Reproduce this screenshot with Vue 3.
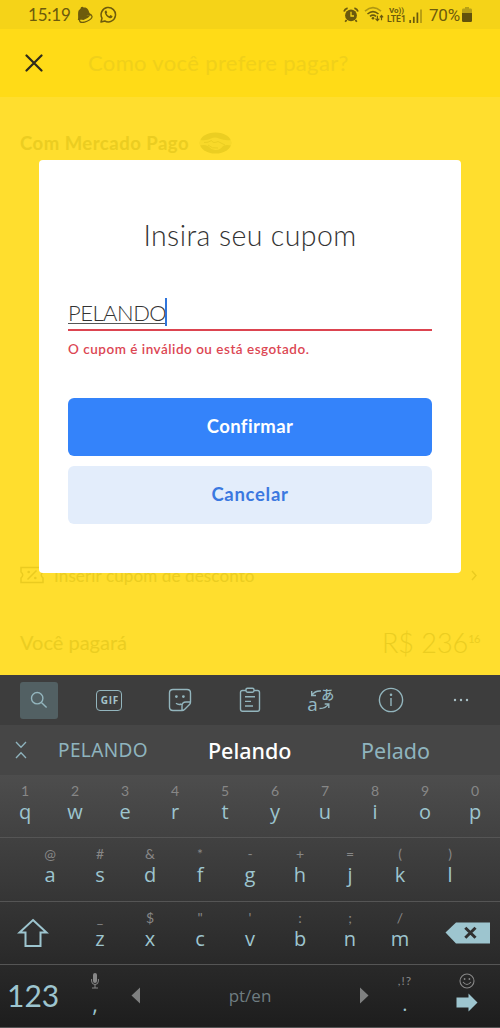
<script setup>
const row1 = [['q','1'],['w','2'],['e','3'],['r','4'],['t','5'],['y','6'],['u','7'],['i','8'],['o','9'],['p','0']]
const row2 = [['a','@'],['s','#'],['d','&'],['f','*'],['g','-'],['h','+'],['j','='],['k','('],['l',')']]
const row3 = [['z','_'],['x','$'],['c','"'],['v',"'"],['b',':'],['n',';'],['m','/']]
</script>

<template>
  <div class="screen">
    <div class="status">
      <span class="time">15:19</span>
      <svg class="bell" width="16" height="17" viewBox="0 0 16 17">
        <path d="M.8 14 C1.8 11 .3 7 1.8 4.2 L3.5 2.8 C3.5 .6 5.8 .2 6.6 1.6 C10.5 1.2 11.5 4 12.5 7 L15 9 L12 12.5 L6 15 Z" fill="#6d5b0c"/>
        <ellipse cx="8.8" cy="12.6" rx="6.6" ry="2.9" transform="rotate(-24 8.8 12.6)" fill="#f3d318" stroke="#6d5b0c" stroke-width="1.2"/>
        <path d="M3 13.5 Q6 9 13.5 9.3 L11 11.8 L6.5 13.9Z" fill="#6d5b0c"/>
      </svg>
      <svg class="wa" width="17" height="17" viewBox="0 0 17 17">
        <path d="M1 16 L2 12.2 A7.2 7.2 0 1 1 4.8 15 Z" fill="none" stroke="#6d5b0c" stroke-width="1.5" stroke-linejoin="round"/>
        <path d="M5.7 4.5 Q4.5 5 4.7 6.5 Q5.5 10.5 9.8 12.2 Q12 12.6 12.5 10.8 L12.4 10.1 L10.3 9.1 L9.4 10.2 Q7.4 9.3 6.5 7.4 L7.2 6.4 L6.4 4.5 Z" fill="#6d5b0c"/>
      </svg>
      <span class="grow"></span>
      <svg class="alarm" width="16" height="16" viewBox="0 0 16 16">
        <circle cx="8" cy="8.4" r="5.9" fill="#6a590d"/>
        <path d="M1 4.6 Q1.8 2 4.6 1.2 M15 4.6 Q14.2 2 11.4 1.2 M3.6 13 L2.2 14.7 M12.4 13 L13.8 14.7" stroke="#6a590d" stroke-width="1.8" fill="none"/>
        <path d="M8 4.8 V9 H11" stroke="#f3d318" stroke-width="1.3" fill="none"/>
      </svg>
      <svg class="wifi" width="20" height="17" viewBox="0 0 20 17">
        <path d="M1 5.2 Q9 -1.8 17 5.2" stroke="#b09812" stroke-width="1.6" fill="none"/>
        <path d="M3.5 8 Q9 3.4 14.5 8 M6 10.3 Q9 8 12 10.3" stroke="#6a590d" stroke-width="1.6" fill="none"/>
        <circle cx="9" cy="12.3" r="1.3" fill="#6a590d"/>
        <path d="M13.4 9.8 V14.5 M11.5 12.7 L13.4 14.7 L15.3 12.7 M17.5 14.2 V9.7 M15.9 11.3 L17.5 9.5 L19.1 11.3" stroke="#6a590d" stroke-width="1.2" fill="none"/>
      </svg>
      <span class="volte"><span class="vo">Vo))</span><span>LTE1</span></span>
      <svg class="signal" width="14" height="14" viewBox="0 0 14 14">
        <path d="M1.2 11 V14 M4.8 7.7 V14 M8.4 3.5 V14" stroke="#6a590d" stroke-width="1.7"/>
        <path d="M12 .5 V14" stroke="#b09812" stroke-width="1.7"/>
      </svg>
      <span class="pct">70%</span>
      <svg class="batt" width="10" height="15" viewBox="0 0 10 15">
        <path d="M3 0 H7 V1.5 H9 Q10 1.5 10 3 V7 H0 V3 Q0 1.5 1 1.5 H3Z" fill="#b8a016"/>
        <path d="M0 6 H10 V13.5 Q10 15 8.8 15 H1.2 Q0 15 0 13.5Z" fill="#62520c"/>
      </svg>
    </div>

    <div class="header">
      <svg width="18" height="18" viewBox="0 0 18 18"><path d="M1.5 1.5 L16.5 16.5 M16.5 1.5 L1.5 16.5" stroke="#2f2b1c" stroke-width="2.2" stroke-linecap="round"/></svg>
      <span>Como você prefere pagar?</span>
    </div>

    <div class="page">
      <div class="mp">
        <span>Com Mercado Pago</span>
        <svg width="33" height="22" viewBox="0 0 33 22">
          <ellipse cx="16.5" cy="11" rx="15.8" ry="10.5" fill="#ebce22"/>
          <path d="M1 8 Q8 9 12 6.5 Q16 4.5 20 6.5 Q26 9 32 8 L32 13.5 Q27 12.5 24 14 Q21 18.5 16 18 Q12 17.5 9 14 Q5 12.5 1 13.5Z" fill="#f8d92a"/>
          <path d="M5 10.5 Q9 11 12.5 8.5 Q14 12 19 9.5 L26 13 M9 13 Q13 17 19 16" stroke="#ebce22" stroke-width="1" fill="none"/>
        </svg>
      </div>
      <span class="grow"></span>
      <div class="coupon">
        <svg width="24" height="18" viewBox="0 0 24 18">
          <path d="M1 1.5 H23 V6 Q19.5 9 23 12 V16.5 H1 V12 Q4.5 9 1 6Z M16.5 4.5 L7.5 13.5" stroke="#eacb20" stroke-width="1.5" fill="none"/>
          <circle cx="8.7" cy="6" r="1.3" fill="#eacb20"/><circle cx="15.3" cy="12" r="1.3" fill="#eacb20"/>
        </svg>
        <span>Inserir cupom de desconto</span>
        <svg class="chev" width="6" height="11" viewBox="0 0 6 11"><path d="M1 1 L5 5.5 L1 10" stroke="#eacb20" stroke-width="1.4" fill="none"/></svg>
      </div>
      <div class="total">
        <span class="you">Você pagará</span>
        <span class="price">R$ 236<sup>16</sup></span>
      </div>
    </div>

    <div class="modal">
      <h1><span>Insira seu cupom</span></h1>
      <div class="field"><span class="value">PELANDO</span><i class="caret"></i></div>
      <p class="error">O cupom é inválido ou está esgotado.</p>
      <button class="btn primary">Confirmar</button>
      <button class="btn secondary">Cancelar</button>
    </div>

    <div class="keyboard">
      <div class="tools">
        <div class="tool"><div class="search">
          <svg width="18" height="18" viewBox="0 0 18 18"><circle cx="7.2" cy="7.2" r="5.7"/><path d="M11.4 11.4 L16.6 16.6"/></svg>
        </div></div>
        <div class="tool"><div class="gif">GIF</div></div>
        <div class="tool">
          <svg width="24" height="24" viewBox="0 0 24 24"><path d="M14 22.5 H5 Q1.5 22.5 1.5 19 V5 Q1.5 1.5 5 1.5 H19 Q22.5 1.5 22.5 5 V14 Q22.5 15.5 21.5 16.5 L16.5 21.5 Q15.5 22.5 14 22.5 Z M14 22.3 V18 Q14 14 18 14 H22.3 M8 15.2 Q10.5 17.2 13.5 16"/><circle cx="8.4" cy="8.6" r=".7" class="dot"/><circle cx="15.4" cy="8.6" r=".7" class="dot"/></svg>
        </div>
        <div class="tool">
          <svg width="22" height="26" viewBox="0 0 22 26"><path d="M7 3.5 H3.5 Q1.5 3.5 1.5 5.5 V22 Q1.5 24.2 3.5 24.2 H18.5 Q20.5 24.2 20.5 22 V5.5 Q20.5 3.5 18.5 3.5 H15 M7 2.8 Q7 1.2 8.5 1.2 H13.5 Q15 1.2 15 2.8 V3.8 Q15 5.2 13.5 5.2 H8.5 Q7 5.2 7 3.8Z M6 9.7 H16 M6 14.4 H12 M6 19 H14"/></svg>
        </div>
        <div class="tool">
          <div class="translate"><span class="latin">a</span><span class="kana">あ</span>
            <svg width="24" height="24" viewBox="0 0 24 24"><path d="M13 3 Q7 2.5 4 7 M3.7 3 V7.5 H8 M11.5 20.5 Q18 20.5 20.5 16 M16.7 16 H20.8 V20"/></svg>
          </div>
        </div>
        <div class="tool">
          <svg width="26" height="26" viewBox="0 0 26 26"><circle cx="13" cy="13" r="11.6"/><path d="M13 11 V19"/><circle cx="13" cy="7.8" r=".6" class="dot"/></svg>
        </div>
        <div class="tool">
          <svg width="18" height="4" viewBox="0 0 18 4"><g class="solid"><circle cx="3" cy="2" r="1.2"/><circle cx="9" cy="2" r="1.2"/><circle cx="15" cy="2" r="1.2"/></g></svg>
        </div>
      </div>

      <div class="suggest">
        <svg width="12" height="18" viewBox="0 0 12 18"><path d="M1 1 L6 6.3 L11 1 M1 17 L6 11.7 L11 17" stroke="#8fb4be" stroke-width="1.3" fill="none"/></svg>
        <span class="s1">PELANDO</span>
        <span class="s2">Pelando</span>
        <span class="s3">Pelado</span>
      </div>

      <div class="keys">
        <div class="row">
          <div v-for="k in row1" :key="k[0]" class="key"><small>{{ k[1] }}</small><b>{{ k[0] }}</b></div>
        </div>
        <div class="row inset">
          <div v-for="k in row2" :key="k[0]" class="key"><small>{{ k[1] }}</small><b>{{ k[0] }}</b></div>
        </div>
        <div class="row">
          <div class="wide shift"><svg width="32" height="30" viewBox="0 0 32 30"><path d="M16 2 L29.5 14.5 H23.5 V28 H8.5 V14.5 H2.5Z" fill="none" stroke="#9dc5cf" stroke-width="2"/></svg></div>
          <div v-for="k in row3" :key="k[0]" class="key"><small>{{ k[1] }}</small><b>{{ k[0] }}</b></div>
          <div class="wide del"><svg width="45" height="22" viewBox="0 0 45 22"><path d="M.5 10.5 L11 .5 H45 V21.5 H11Z" fill="#9dc5cf"/><path d="M20.3 5.8 L30.5 15.8 M30.5 5.8 L20.3 15.8" stroke="#303030" stroke-width="3"/></svg></div>
        </div>
        <div class="row">
          <div class="num">123</div>
          <div class="key">
            <svg class="mic" width="8" height="16" viewBox="0 0 8 16"><rect x="2" y="0" width="4" height="10" rx="2" fill="#878787"/><path d="M.6 6 V8 Q.6 11.5 4 11.5 Q7.4 11.5 7.4 8 V6 M4 11.5 V15 M1 15 H7" stroke="#878787" fill="none"/></svg>
            <b class="comma">,</b>
          </div>
          <div class="space">
            <svg width="9" height="17" viewBox="0 0 9 17"><path d="M9 .5 V16.5 L.5 8.5Z" fill="#7f8080"/></svg>
            <span>pt/en</span>
            <svg width="9" height="17" viewBox="0 0 9 17"><path d="M0 .5 V16.5 L8.5 8.5Z" fill="#7f8080"/></svg>
          </div>
          <div class="key"><small class="punct">,!?</small><b class="period">.</b></div>
          <div class="enter">
            <svg width="16" height="16" viewBox="0 0 16 16"><circle cx="8" cy="8" r="7" fill="none" stroke="#878787" stroke-width="1.1"/><path d="M4 9 Q8 14 12 9" fill="none" stroke="#878787" stroke-width="1.1"/><circle cx="5.6" cy="6" r=".9" fill="#878787"/><circle cx="10.4" cy="6" r=".9" fill="#878787"/></svg>
            <svg width="22" height="19" viewBox="0 0 22 19"><path d="M.5 4.5 H12.5 V.5 L21.5 9.5 L12.5 18.5 V14.5 H.5Z" fill="#9dc5cf"/></svg>
          </div>
        </div>
      </div>
    </div>
  </div>
</template>

<style>
body { margin: 0; }
</style>

<style scoped>
* { box-sizing: border-box; }
svg { display: block; flex: none; }
.screen { position: relative; width: 500px; height: 1028px; display: flex; flex-direction: column; overflow: hidden; background: #ffde2e; font-family: Lato, sans-serif; white-space: nowrap; }
.grow { flex: 1; }
.status { height: 29px; flex: none; background: #f5d318; display: flex; align-items: center; padding: 0 28px 0; color: #6d5b0c; }
.time { font-size: 17px; width: 42px; letter-spacing: -.2px; }
.bell { margin-left: 7px; }
.wa { margin-left: 7px; }
.alarm { margin-right: 5px; }
.wifi { margin-right: 3px; }
.volte { display: flex; flex-direction: column; align-items: center; font: bold 8.6px/8px Roboto, sans-serif; width: 19px; margin-right: 3px; }
.vo { font-size: 8px; }
.signal { margin-right: 6px; margin-top: 2px; }
.pct { font: 17px/20px Roboto, sans-serif; width: 31px; margin-right: 2px; letter-spacing: -.2px; }
.batt { margin-right: 0; }
.header { height: 68px; flex: none; background: #ffdb17; display: flex; align-items: center; padding: 0 25px; }
.header span { margin-left: 45px; margin-top: -2px; font-size: 22px; color: #f0d01a; letter-spacing: .35px; }
.page { height: 578px; flex: none; display: flex; flex-direction: column; padding: 34px 20px 0; color: #ebcd21; }
.mp { display: flex; align-items: center; height: 24px; font-size: 18.5px; font-weight: 700; letter-spacing: .5px; }
.mp svg { margin-left: 9px; }
.mp span { width: 170px; }
.coupon { display: flex; align-items: center; height: 24px; font-size: 17px; margin-bottom: 38px; letter-spacing: .13px; }
.coupon span { margin-left: 10px; }
.chev { margin-left: auto; margin-right: 3px; }
.total { display: flex; align-items: center; justify-content: space-between; height: 34px; margin-bottom: 16px; }
.you { font-size: 20px; }
.price { font-size: 27px; font-weight: 300; }
.price sup { font-size: 11px; font-weight: 400; letter-spacing: -.5px; line-height: 0; vertical-align: 10px; }

.modal { position: absolute; left: 39px; top: 160px; width: 422px; height: 413px; padding: 56px 29px 0; background: #fff; border-radius: 4px; display: flex; flex-direction: column; }
.modal h1 { margin: -1px 0 1px; height: 40px; line-height: 40px; font-size: 28.5px; font-weight: 300; text-align: center; color: #333; letter-spacing: .4px; }
.field { margin-top: 42px; height: 33px; border-bottom: 2px solid #dc4450; display: flex; align-items: flex-start; }
.value { font-size: 22px; line-height: 30px; font-weight: 300; letter-spacing: -.5px; color: #333; height: 26px; border-bottom: 1px solid #555; width: 97px; }
.caret { width: 2px; height: 28px; margin-top: 0; background: #2f75dc; }
.error { margin: 8px 0 1px; height: 20px; line-height: 20px; font-size: 13.5px; font-weight: 600; letter-spacing: .51px; color: #dc4653; }
.btn { height: 58px; border: 0; border-radius: 6px; font: 700 18.5px Lato, sans-serif; letter-spacing: .4px; padding: 0 0 3px; }
.primary { margin-top: 38px; background: #3483fa; color: #fff; }
.secondary { margin-top: 10px; background: #e3edfb; color: #3b78e0; letter-spacing: .7px; }

.keyboard { flex: none; height: 353px; background: #3d3d3d; }
.tools { height: 50px; display: grid; grid-template-columns: repeat(7, 1fr); padding: 0 4px; }
.tool { display: flex; align-items: center; justify-content: center; }
.tool svg { fill: none; stroke: #93b5bd; stroke-width: 1.4; }
.tool svg .dot { fill: #93b5bd; }
.tool svg .solid { fill: #a9c0c6; stroke: none; }
.search { width: 38px; height: 37px; background: #526063; border-radius: 3px; display: flex; align-items: center; justify-content: center; }
.gif { width: 26px; height: 21px; border: 1.5px solid #93b5bd; border-radius: 4px; text-align: center; font: bold 10px/18px "Open Sans", sans-serif; letter-spacing: .8px; padding-left: 1px; color: #a5c3ca; }
.translate { position: relative; width: 24px; height: 24px; color: #93b9c3; }
.translate span { position: absolute; }
.latin { left: -1px; top: 7px; font: 19px/19px "Open Sans", sans-serif; }
.kana { right: -2px; top: -1px; font: 500 13px/14px "Noto Sans CJK JP", sans-serif; }
.suggest { height: 50px; background: #464646; display: flex; align-items: center; padding-left: 15px; font-family: "Noto Sans", sans-serif; color: #8fb4be; }
.s1 { margin-left: 31px; width: 90px; font-size: 19px; letter-spacing: .4px; }
.s2 { margin-left: 60px; width: 84px; font-size: 21.5px; color: #fff; font-weight: 500; }
.s3 { margin-left: 69px; font-size: 21.5px; }
.keys { height: 253px; background: linear-gradient(#4d4d4d, #1d1d1d); }
.row { height: 63.25px; border-bottom: 1.5px solid #555; display: flex; }
.inset { padding: 0 25px; }
.key { width: 50px; display: flex; flex-direction: column; align-items: center; padding-top: 7px; }
.key small { font: 14px/18px Lato, sans-serif; height: 18px; color: #878787; }
.key b { font: 500 20px/24px "Open Sans", sans-serif; color: #9dc5cf; height: 24px; }
.wide { width: 75px; display: flex; align-items: center; }
.shift { padding-left: 17px; }
.del { padding-left: 20px; }
.num { width: 70px; padding-left: 7px; font-size: 30px; line-height: 60px; color: #9dc5cf; }
.mic { margin-top: 1px; }
.key b.comma { margin-top: 2px; font-size: 22px; }
.key small.punct { font-size: 12px; letter-spacing: 1px; }
.key b.period { margin-top: 2px; }
.space { width: 260px; display: flex; align-items: center; justify-content: space-between; padding: 0 11px; font: 17px "Open Sans", sans-serif; color: #6f7d81; }
.enter { width: 70px; display: flex; flex-direction: column; align-items: center; padding: 8px 0 0 4px; gap: 4px; }
</style>
